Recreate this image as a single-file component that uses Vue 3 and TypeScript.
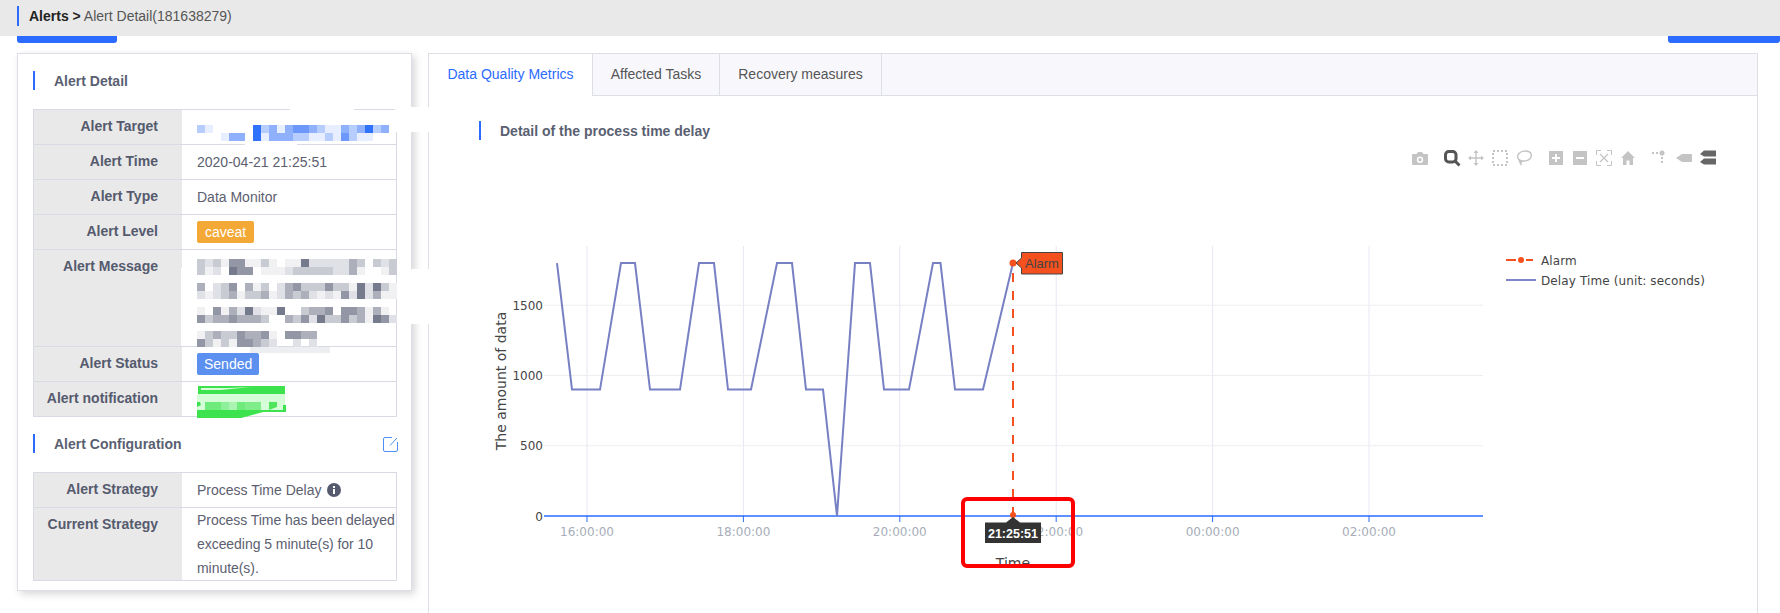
<script setup lang="ts">
import { computed } from 'vue';

// pixelated blocks: one digit per 8px cell, 0 = nothing
const BLUES = ['transparent', '#e6eeff', '#b7cdfd', '#8fb0fb', '#6c97fb', '#2f72fb'];
const GREYS = ['transparent', '#f1f1f4', '#e0e1e6', '#c9cbd2', '#adb0bb', '#9396a4', '#757a8d'];

const targetBlur = ['210000052313443211323523', '000133051333221121421100'];
const messageBlur = [
  '3231551131011622222430323',
  '3120655011123333322410013',
  '',
  '4023504130245333533162631',
  '2123413341243421215262411',
  '',
  '1051426211600344505541410',
  '5344544430043526335341652',
  '',
  '134335445105544',
  '531315543200202',
];

const cellsOf = (row: string, palette: string[]) => row.split('').map((c) => palette[Number(c)]);

// bits of the original redaction that run over the table and card borders (page coordinates)
const CARD_X = 18;
const CARD_Y = 54;
const smudges = [
  { x: 395, y: 107, w: 34, h: 25, color: '#fff' },
  { x: 290, y: 108, w: 64, h: 2, color: '#fff' },
  { x: 245, y: 143, w: 52, h: 2, color: '#fff' },
  { x: 397, y: 269, w: 32, h: 55, color: '#fff' },
  { x: 181, y: 268, w: 2, h: 78, color: '#fff' },
  { x: 250, y: 347, w: 80, h: 6, color: '#eceef2' },
].map((s) => ({
  left: `${s.x - CARD_X}px`,
  top: `${s.y - CARD_Y}px`,
  width: `${s.w}px`,
  height: `${s.h}px`,
  background: s.color,
}));

// chart scales
const xOfHour = (h: number) => 587 + (h - 16) * 78.2;
const yOf = (v: number) => 516 - v * 0.1405;

const xTicks = [
  { label: '16:00:00', x: xOfHour(16) },
  { label: '18:00:00', x: xOfHour(18) },
  { label: '20:00:00', x: xOfHour(20) },
  { label: '22:00:00', x: xOfHour(22) },
  { label: '00:00:00', x: xOfHour(24) },
  { label: '02:00:00', x: xOfHour(26) },
];
const yTicks = [0, 500, 1000, 1500];

const delaySeries: [number, number][] = [
  [557, 1800], [572, 900], [600, 900], [621, 1800], [635, 1800], [650, 900], [680, 900],
  [699, 1800], [714, 1800], [728, 900], [751, 900], [777, 1800], [792, 1800], [806, 900],
  [823, 900], [837, 0], [855, 1800], [870, 1800], [884, 900], [909, 900], [933, 1800],
  [940.5, 1800], [955, 900], [983, 900], [1013, 1800],
];
const delayPoints = computed(() => delaySeries.map(([x, v]) => `${x},${yOf(v)}`).join(' '));
</script>

<template>
  <div class="page">
    <header class="crumb-bar">
      <div class="crumb"><b>Alerts &gt;</b> Alert Detail(181638279)</div>
    </header>
    <div class="btn-edges">
      <span class="btn-edge btn-edge--left"></span>
      <span class="btn-edge btn-edge--right"></span>
    </div>

    <main class="content">
      <section class="card">
        <h3 class="section-title">Alert Detail</h3>
        <div class="info-table">
          <div class="info-row">
            <div class="info-label">Alert Target</div>
            <div class="info-value info-value--target">
              <div v-for="(row, i) in targetBlur" :key="i" class="blur-row">
                <i v-for="(c, j) in cellsOf(row, BLUES)" :key="j" :style="{ background: c }"></i>
              </div>
            </div>
          </div>
          <div class="info-row">
            <div class="info-label">Alert Time</div>
            <div class="info-value">2020-04-21 21:25:51</div>
          </div>
          <div class="info-row">
            <div class="info-label">Alert Type</div>
            <div class="info-value">Data Monitor</div>
          </div>
          <div class="info-row">
            <div class="info-label">Alert Level</div>
            <div class="info-value"><span class="tag tag--caveat">caveat</span></div>
          </div>
          <div class="info-row info-row--message">
            <div class="info-label">Alert Message</div>
            <div class="info-value info-value--message">
              <div v-for="(row, i) in messageBlur" :key="i" class="blur-row">
                <i v-for="(c, j) in cellsOf(row, GREYS)" :key="j" :style="{ background: c }"></i>
              </div>
            </div>
          </div>
          <div class="info-row">
            <div class="info-label">Alert Status</div>
            <div class="info-value"><span class="tag tag--sended">Sended</span></div>
          </div>
          <div class="info-row">
            <div class="info-label">Alert notification</div>
            <div class="info-value info-value--notify">
              <svg width="92" height="34" viewBox="0 0 92 34">
                <path d="M1 1h87v8H1z" fill="#3de34e" />
                <path d="M4 3h28l22-1-30 3H4z" fill="#d5fdd8" />
                <path d="M0 9h88v16H0z" fill="#d5fdd8" />
                <path d="M8 17h16v8H8z" fill="#6eeb7a" />
                <path d="M24 17h8v8h-8z" fill="#8ef09a" />
                <path d="M32 17h8v8h-8z" fill="#a8f4b0" />
                <path d="M40 17h8v8h-8z" fill="#6eeb7a" />
                <path d="M48 17h16v8H48z" fill="#7fee8a" />
                <path d="M72 17h8v5l-8 3z" fill="#4fe65d" />
                <path d="M0 25H86V20h3v7H66L44 33H0zM0 17h3l1 3-4 2z" fill="#3de34e" />
              </svg>
            </div>
          </div>
        </div>

        <div class="section-head">
          <h3 class="section-title">Alert Configuration</h3>
          <svg class="edit-icon" width="15" height="15" viewBox="0 0 15 15" fill="none" stroke="#4d8ff5">
            <path d="M9 .5H2A1.500 1.500 0 0 0 .5 2v11A1.500 1.500 0 0 0 2 14.500h11a1.500 1.500 0 0 0 1.500-1.500V5" />
            <path d="M7 8.500 14 1" />
          </svg>
        </div>
        <div class="info-table">
          <div class="info-row">
            <div class="info-label">Alert Strategy</div>
            <div class="info-value">
              Process Time Delay
              <svg class="info-icon" width="14" height="14" viewBox="0 0 14 14">
                <circle cx="7" cy="7" r="7" fill="#555a6e" />
                <rect x="6" y="6" width="2" height="5" fill="#fff" />
                <rect x="6" y="3" width="2" height="2" fill="#fff" />
              </svg>
            </div>
          </div>
          <div class="info-row info-row--strategy">
            <div class="info-label">Current Strategy</div>
            <div class="info-value info-value--strategy">
              Process Time has been delayed<br />exceeding 5 minute(s) for 10<br />minute(s).
            </div>
          </div>
        </div>

        <span v-for="(s, i) in smudges" :key="i" class="smudge" :style="s"></span>
      </section>

      <section class="panel">
        <nav class="tabs">
          <a class="tab">Data Quality Metrics</a>
          <a class="tab">Affected Tasks</a>
          <a class="tab">Recovery measures</a>
        </nav>
        <h3 class="section-title section-title--chart">Detail of the process time delay</h3>

        <!-- viewBox uses page coordinates, so the plot numbers read the same as the screenshot -->
        <svg class="chart" width="1328" height="468" viewBox="429 145 1328 468">
          <!-- modebar -->
          <g fill="#c4c4c4">
            <g transform="translate(1412 150)">
              <path fill-rule="evenodd" d="M1 4h3.500L6 2h4l1.500 2H15a1 1 0 0 1 1 1v9a1 1 0 0 1-1 1H1a1 1 0 0 1-1-1V5a1 1 0 0 1 1-1zm7 2.500a3.200 3.200 0 1 0 0 6.400 3.200 3.200 0 0 0 0-6.400zm0 1.500a1.700 1.700 0 1 1 0 3.400 1.700 1.700 0 0 1 0-3.400z" />
            </g>
            <g transform="translate(1444 150)" fill="none" stroke="#555">
              <rect x="1.500" y="1.500" width="10.500" height="10.500" rx="3.200" stroke-width="3" />
              <path d="M11 11 15.500 15.500" stroke-width="3" />
            </g>
            <g transform="translate(1468 150)">
              <path d="M7.300 3h1.400v4.300H13v1.400H8.700V13H7.300V8.700H3V7.300h4.300z" />
              <path d="M8 0l2.500 3h-5zM8 16l-2.500-3h5zM0 8l3-2.500v5zM16 8l-3 2.500v-5z" />
            </g>
            <rect x="1493" y="151" width="14" height="14" fill="none" stroke="#c4c4c4" stroke-width="2" stroke-dasharray="2 2" />
            <g transform="translate(1516 150)" fill="none" stroke="#c4c4c4" stroke-width="1.500">
              <ellipse cx="8.500" cy="6" rx="7" ry="5" transform="rotate(-12 8.500 6)" />
              <path d="M3.500 9.500c-.5 2 .5 3.500 1.500 3s.5-2-.5-1.500 0 3 1 4" />
            </g>
            <path fill-rule="evenodd" d="M1549 151h14v14h-14zm6 3v3h-3v2h3v3h2v-3h3v-2h-3v-3z" />
            <path fill-rule="evenodd" d="M1573 151h14v14h-14zm3 6v2h8v-2z" />
            <g transform="translate(1596 150)" fill="none" stroke="#c4c4c4">
              <path d="M.5 5V.5H5M11 .5h4.500V5M15.500 11v4.500H11M5 15.500H.5V11" />
              <path d="M4 4l8 8M12 4l-8 8" stroke-width="1.200" />
            </g>
            <path d="M1628 151l7 7h-2v7h-3.500v-4.500h-3V165H1623v-7h-2z" />
            <g transform="translate(1652 150)">
              <circle cx="10" cy="3" r="2.500" />
              <rect x="0" y="2" width="2" height="2" />
              <rect x="4" y="2" width="2" height="2" />
              <rect x="9" y="7" width="2" height="2" />
              <rect x="9" y="11" width="2" height="2" />
            </g>
            <path d="M1676 158l6-4h9a1 1 0 0 1 1 1v6a1 1 0 0 1-1 1h-9z" />
            <path d="M1700 154l4-3.500h12v6h-12zM1700 162l4-3.500h12v6h-12z" fill="#666" />
          </g>

          <!-- grid -->
          <line v-for="t in xTicks" :key="t.label" class="grid-v" :x1="t.x" :x2="t.x" y1="246" y2="516" />
          <line v-for="v in yTicks.slice(1)" :key="v" class="grid-h" x1="544" x2="1483" :y1="yOf(v)" :y2="yOf(v)" />

          <!-- axes -->
          <line class="axis" x1="544" x2="1483" y1="516" y2="516" />
          <g v-for="t in xTicks" :key="t.label">
            <line class="axis-tick" :x1="t.x" :x2="t.x" y1="516" y2="522" />
            <text class="tick tick--x" :x="t.x" y="536">{{ t.label }}</text>
          </g>
          <text v-for="v in yTicks" :key="v" class="tick tick--y" x="543" :y="yOf(v) + 4.500">{{ v }}</text>
          <text class="axis-title" transform="translate(506 381) rotate(-90)">The amount of data</text>
          <text class="axis-title" x="1013" y="568">Time</text>

          <!-- series -->
          <polyline class="delay-line" :points="delayPoints" />
          <line class="alarm-line" x1="1013" x2="1013" y1="263" y2="516" />
          <circle cx="1013" cy="263" r="3.500" fill="#f4511e" />
          <circle cx="1013" cy="515" r="3" fill="#f4511e" />

          <!-- hover labels -->
          <path class="alarm-label" d="M1016 263l5.500-5v-5.500H1062.500V274H1021.500v-6z" />
          <text class="alarm-text" x="1025" y="268">Alarm</text>
          <path d="M1013 517l7 5.500h21V543h-56v-20.500h21z" fill="#333" />
          <text class="time-text" x="1013" y="537.500">21:25:51</text>

          <!-- legend -->
          <line x1="1506" x2="1533" y1="260" y2="260" stroke="#f4511e" stroke-width="2" stroke-dasharray="10 10 7" />
          <circle cx="1521" cy="260" r="3" fill="#f4511e" />
          <text class="legend-text" x="1541" y="264.500">Alarm</text>
          <line x1="1506" x2="1536" y1="280" y2="280" stroke="#7d85c8" stroke-width="2" />
          <text class="legend-text" x="1541" y="284.500">Delay Time (unit: seconds)</text>

          <!-- annotation drawn on the screenshot -->
          <rect x="963" y="499" width="110" height="67" rx="4" fill="none" stroke="#f00" stroke-width="4" />
        </svg>
      </section>
    </main>
  </div>
</template>

<style scoped>
.page {
  width: 1780px;
  height: 613px;
  overflow: hidden;
  font-family: 'Liberation Sans', Arial, sans-serif;
  font-size: 14px;
  color: #5c6070;
}

.crumb-bar {
  height: 36px;
  padding: 6px 0 0 17px;
  box-sizing: border-box;
  background: #e9e9e9;
}

.crumb {
  height: 20px;
  padding-left: 10px;
  border-left: 2px solid #2b6bff;
  line-height: 21px;
  color: #555;
}

.crumb b {
  color: #222;
}

.btn-edges {
  display: flex;
  justify-content: space-between;
  height: 7px;
  padding-left: 17px;
}

.btn-edge {
  height: 7px;
  background: #2b6bff;
  border-radius: 0 0 3px 3px;
}

.btn-edge--left {
  width: 100px;
}

.btn-edge--right {
  width: 112px;
}

.content {
  display: flex;
  gap: 16px;
  padding: 10px 0 0 17px;
}

.card {
  position: relative;
  z-index: 1;
  flex: none;
  width: 395px;
  height: 538px;
  box-sizing: border-box;
  padding: 17px 14px 0 15px;
  border: 1px solid #dcdfe6;
  background: #fff;
  box-shadow: 3px 3px 8px rgba(0, 0, 0, 0.16);
}

.section-title {
  height: 19px;
  margin: 0;
  padding-left: 19px;
  border-left: 2px solid #2b6bff;
  font-size: 14px;
  line-height: 21px;
  font-weight: 700;
  color: #5a5f72;
}

.section-title--chart {
  margin: 25px 0 5px 50px;
}

.section-head {
  position: relative;
  margin: 17px 0 19px;
}

.edit-icon {
  position: absolute;
  top: 3px;
  right: -1px;
}

.info-table {
  margin-top: 19px;
  width: 364px;
  box-sizing: border-box;
  border: 1px solid #d8dbe3;
  border-bottom: 0;
}

.section-head + .info-table {
  margin-top: 0;
}

.info-row {
  display: flex;
  height: 35px;
  box-sizing: border-box;
  border-bottom: 1px solid #d8dbe3;
}

.info-row--message {
  height: 97px;
}

.info-row--strategy {
  height: 73px;
}

.info-label {
  flex: none;
  width: 148px;
  box-sizing: border-box;
  padding-right: 24px;
  background: #e9e9e9;
  text-align: right;
  font-weight: 700;
  line-height: 33px;
  color: #555a6e;
}

.info-value {
  position: relative;
  flex: 1;
  min-width: 0;
  padding-left: 15px;
  line-height: 34px;
  white-space: nowrap;
}

.info-value--target {
  padding-top: 15px;
}

.info-value--message {
  padding-top: 9px;
}

.info-value--notify svg {
  position: absolute;
  top: 3px;
  left: 15px;
}

.info-value--strategy {
  line-height: 24px;
  letter-spacing: -0.05px;
}

.info-icon {
  margin-left: 2px;
  vertical-align: -2px;
}

.blur-row {
  display: flex;
  height: 8px;
}

.blur-row i {
  flex: none;
  width: 8px;
  height: 8px;
}

.tag {
  display: inline-block;
  height: 22px;
  margin-top: 6px;
  padding: 0 8px;
  border-radius: 2px;
  line-height: 22px;
  color: #fff;
  vertical-align: top;
}

.tag--caveat {
  background: #f4a836;
}

.tag--sended {
  padding: 0 7px;
  background: #5b8ff0;
}

.smudge {
  position: absolute;
}

.panel {
  flex: none;
  width: 1330px;
  height: 560px;
  box-sizing: border-box;
  border: 1px solid #dcdfe6;
  border-width: 1px 1px 0;
}

.tabs {
  display: flex;
  height: 42px;
  box-sizing: border-box;
  border-bottom: 1px solid #dcdfe6;
  background: #f8f8fc;
}

.tab {
  height: 41px;
  box-sizing: border-box;
  border-right: 1px solid #dcdfe6;
  text-align: center;
  line-height: 40px;
  color: #555;
}

.tab:nth-child(1) {
  width: 164px;
  height: 42px;
  background: #fff;
  color: #2b6bff;
}

.tab:nth-child(2) {
  width: 127px;
}

.tab:nth-child(3) {
  width: 162px;
}

.chart {
  display: block;
}

.chart text {
  font-family: 'DejaVu Sans', Verdana, sans-serif;
}

.grid-v {
  stroke: #e6e7f3;
  stroke-width: 1;
}

.grid-h {
  stroke: #eceef2;
  stroke-width: 1;
}

.axis {
  stroke: #2b6bff;
  stroke-width: 1.5;
}

.axis-tick {
  stroke: #2b6bff;
  stroke-width: 1;
}

.tick {
  font-size: 12px;
}

.tick--x {
  fill: #a6adb8;
  text-anchor: middle;
}

.tick--y {
  fill: #444;
  text-anchor: end;
}

.axis-title {
  font-size: 14px;
  fill: #444;
  text-anchor: middle;
}

.delay-line {
  fill: none;
  stroke: #7880c4;
  stroke-width: 2;
}

.alarm-line {
  stroke: #f4511e;
  stroke-width: 2;
  stroke-dasharray: 9 9;
  stroke-dashoffset: 8;
}

.alarm-label {
  fill: #f4511e;
  stroke: #444;
  stroke-width: 1;
}

.chart .alarm-text {
  font-family: 'Liberation Sans', Arial, sans-serif;
  font-size: 13px;
  fill: #444;
}

.chart .time-text {
  font-family: 'Liberation Sans', Arial, sans-serif;
  font-size: 12.5px;
  font-weight: 700;
  fill: #fff;
  text-anchor: middle;
}

.legend-text {
  font-size: 12px;
  letter-spacing: 0.12px;
  fill: #444;
}
</style>

<style>
html,
body {
  margin: 0;
  overflow: hidden;
  background: #fff;
}
</style>
